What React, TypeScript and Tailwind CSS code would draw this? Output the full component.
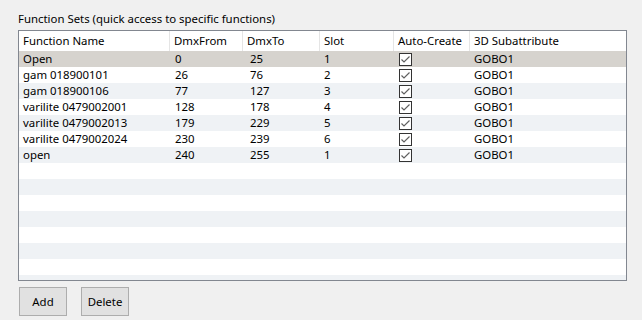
import React from 'react';

interface FunctionSet {
  name: string;
  from: number;
  to: number;
  slot: number;
  autoCreate: boolean;
  sub: string;
}

const rows: FunctionSet[] = [
  { name: 'Open', from: 0, to: 25, slot: 1, autoCreate: true, sub: 'GOBO1' },
  { name: 'gam 018900101', from: 26, to: 76, slot: 2, autoCreate: true, sub: 'GOBO1' },
  { name: 'gam 018900106', from: 77, to: 127, slot: 3, autoCreate: true, sub: 'GOBO1' },
  { name: 'varilite 0479002001', from: 128, to: 178, slot: 4, autoCreate: true, sub: 'GOBO1' },
  { name: 'varilite 0479002013', from: 179, to: 229, slot: 5, autoCreate: true, sub: 'GOBO1' },
  { name: 'varilite 0479002024', from: 230, to: 239, slot: 6, autoCreate: true, sub: 'GOBO1' },
  { name: 'open', from: 240, to: 255, slot: 1, autoCreate: true, sub: 'GOBO1' },
];

const headers = ['Function Name', 'DmxFrom', 'DmxTo', 'Slot', 'Auto-Create', '3D Subattribute'];
const cols = 'grid grid-cols-[151px_73px_77px_74px_76px_1fr]';

const CheckBox = () => (
  <div className="w-[13px] h-[13px] border border-[#333333] bg-white flex items-center justify-center">
    <svg width="11" height="11" viewBox="0 0 11 11" fill="none">
      <path d="M1.5 5.5 L4 8 L9.5 2.5" stroke="#606060" strokeWidth="1.2" />
    </svg>
  </div>
);

export default function App() {
  const fillers = Array.from({ length: 8 }, (_, i) => i + rows.length);

  return (
    <div className="w-[642px] h-[320px] bg-[#f0f0f0] pt-[11px] pl-[18px] text-[11.4px] leading-[16px] text-black" style={{ fontFamily: '"Noto Sans", "Open Sans", sans-serif' }}>
      <div className="h-[16px]">Function Sets (quick access to specific functions)</div>
      <div className="mt-[3px] w-[609px] h-[251px] border border-[#828790] bg-white overflow-hidden">
        <div className={`${cols} h-[20px] bg-white`}>
          {headers.map((h, i) => (
            <div key={h} className={`flex items-center pl-[4px] ${i < 5 ? 'border-r border-[#e5e5e5]' : ''}`}>
              {h}
            </div>
          ))}
        </div>
        {rows.map((r, i) => (
          <div
            key={r.name + i}
            className={`${cols} h-[16px] ${i === 0 ? 'bg-[#d6d3ce]' : i % 2 === 0 ? 'bg-[#eff2f5]' : 'bg-white'}`}
          >
            <div className="pl-[4px]">{r.name}</div>
            <div className="pl-[5px]">{r.from}</div>
            <div className="pl-[7px]">{r.to}</div>
            <div className="pl-[4px]">{r.slot}</div>
            <div className="pl-[5px] flex items-center">{r.autoCreate && <CheckBox />}</div>
            <div className="pl-[4px]">{r.sub}</div>
          </div>
        ))}
        {fillers.map((i) => (
          <div key={i} className={`h-[16px] ${i % 2 === 0 ? 'bg-[#eff2f5]' : 'bg-white'}`} />
        ))}
      </div>
      <div className="flex gap-[14px] mt-[6px] pl-[1px]">
        <button className="w-[48px] h-[29px] bg-[#e1e1e1] border border-[#adadad]">Add</button>
        <button className="w-[48px] h-[29px] bg-[#e1e1e1] border border-[#adadad]">Delete</button>
      </div>
    </div>
  );
}
